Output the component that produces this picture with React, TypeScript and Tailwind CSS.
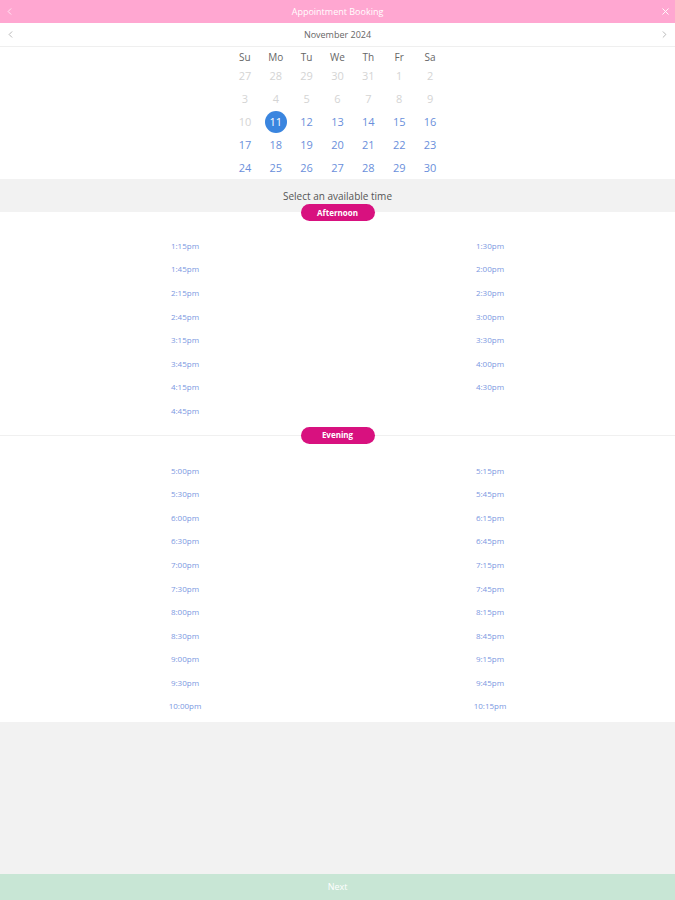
import { ChevronLeft, ChevronRight, X } from "lucide-react";

const weekdays = ["Su", "Mo", "Tu", "We", "Th", "Fr", "Sa"];

// days of the grid; muted = outside of the bookable range
const weeks: { d: number; muted?: boolean }[][] = [
  [27, 28, 29, 30, 31, 1, 2].map((d) => ({ d, muted: true })),
  [3, 4, 5, 6, 7, 8, 9].map((d) => ({ d, muted: true })),
  [{ d: 10, muted: true }, ...[11, 12, 13, 14, 15, 16].map((d) => ({ d }))],
  [17, 18, 19, 20, 21, 22, 23].map((d) => ({ d })),
  [24, 25, 26, 27, 28, 29, 30].map((d) => ({ d })),
];

const afternoon = [
  "1:15pm", "1:30pm", "1:45pm", "2:00pm", "2:15pm", "2:30pm", "2:45pm", "3:00pm",
  "3:15pm", "3:30pm", "3:45pm", "4:00pm", "4:15pm", "4:30pm", "4:45pm",
];

const evening = [
  "5:00pm", "5:15pm", "5:30pm", "5:45pm", "6:00pm", "6:15pm", "6:30pm", "6:45pm",
  "7:00pm", "7:15pm", "7:30pm", "7:45pm", "8:00pm", "8:15pm", "8:30pm", "8:45pm",
  "9:00pm", "9:15pm", "9:30pm", "9:45pm", "10:00pm", "10:15pm",
];

function Pill({ label }: { label: string }) {
  return (
    <div className="flex h-[17px] w-[74px] items-center justify-center rounded-full bg-[#d8117f] text-[8px] font-bold text-white">
      {label}
    </div>
  );
}

function Slots({ times }: { times: string[] }) {
  return (
    <div className="mx-auto grid w-[610px] grid-cols-2 auto-rows-[23.6px]">
      {times.map((t) => (
        <button
          key={t}
          type="button"
          className="flex items-center justify-center text-[8px] text-[#7b98df]"
        >
          {t}
        </button>
      ))}
    </div>
  );
}

export default function App() {
  return (
    <div
      className="flex min-h-[900px] flex-col bg-[#f2f2f2]"
      style={{ fontFamily: '"Open Sans", "Noto Sans", sans-serif' }}
    >
      {/* Top bar */}
      <header className="flex h-[23px] shrink-0 items-center justify-between bg-[#ffa7d1] px-[4px]">
        <ChevronLeft className="h-[11px] w-[11px] text-white" strokeWidth={1.5} />
        <p className="text-[9px] text-white">Appointment Booking</p>
        <X className="h-[11px] w-[11px] text-white" strokeWidth={2} />
      </header>

      {/* Month switcher */}
      <div className="flex h-[24px] shrink-0 items-center justify-between border-b border-[#efefef] bg-white px-[5px]">
        <ChevronLeft className="h-[11px] w-[11px] text-[#999]" strokeWidth={1.5} />
        <p className="text-[9px] text-[#666]">November 2024</p>
        <ChevronRight className="h-[11px] w-[11px] text-[#999]" strokeWidth={1.5} />
      </div>

      {/* Calendar */}
      <div className="shrink-0 bg-white">
        <div className="mx-auto w-[216px]">
          <div className="grid h-[17px] grid-cols-7 items-center pt-[3px]">
            {weekdays.map((w) => (
              <span key={w} className="text-center text-[10px] text-[#666]">
                {w}
              </span>
            ))}
          </div>
          {weeks.map((row, i) => (
            <div key={i} className="grid h-[23px] grid-cols-7 items-center pt-[1px]">
              {row.map(({ d, muted }) => (
                <div key={d} className="flex justify-center">
                  {d === 11 && !muted ? (
                    <span className="flex h-[22px] w-[22px] items-center justify-center rounded-full bg-[#3a85df] text-[11px] text-white">
                      {d}
                    </span>
                  ) : (
                    <span
                      className={`text-[11px] ${muted ? "text-[#d4d4d4]" : "text-[#6a8fdb]"}`}
                    >
                      {d}
                    </span>
                  )}
                </div>
              ))}
            </div>
          ))}
        </div>
      </div>

      {/* Prompt */}
      <div className="flex h-[33px] shrink-0 items-center justify-center pt-[1px] text-[10px] text-[#555]">
        Select an available time
      </div>

      {/* Slots */}
      <div className="shrink-0 bg-white pb-[4px]">
        <div className="relative -mt-[8px] flex justify-center">
          <Pill label="Afternoon" />
        </div>
        <div className="pt-[13px]">
          <Slots times={afternoon} />
        </div>

        <div className="mt-[12px] flex h-0 justify-center border-t border-[#f0f0f0]">
          <div className="-mt-[9px]">
            <Pill label="Evening" />
          </div>
        </div>
        <div className="pt-[23px]">
          <Slots times={evening} />
        </div>
      </div>

      <div className="flex-1" />

      {/* Footer */}
      <button
        type="button"
        className="flex h-[26px] shrink-0 items-center justify-center bg-[#c8e6d5] text-[9px] text-white"
      >
        Next
      </button>
    </div>
  );
}
